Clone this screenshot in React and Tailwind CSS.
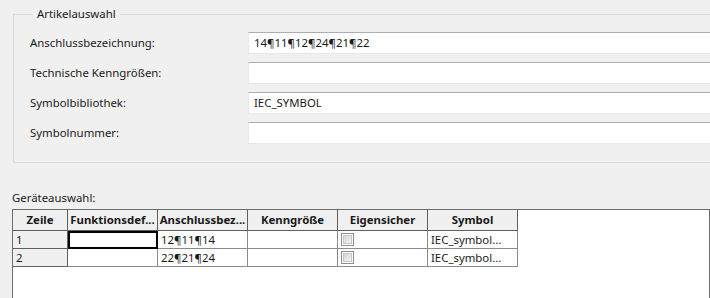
import React from 'react';

// Artikel- und Geräteauswahl (Windows forms style)
const fields = [
  { label: 'Anschlussbezeichnung:', value: '14¶11¶12¶24¶21¶22' },
  { label: 'Technische Kenngrößen:', value: '' },
  { label: 'Symbolbibliothek:', value: 'IEC_SYMBOL' },
  { label: 'Symbolnummer:', value: '' },
];

const columns = [
  { title: 'Zeile', width: 'w-[55px]' },
  { title: 'Funktionsdef...', width: 'w-[90px]' },
  { title: 'Anschlussbez...', width: 'w-[90px]' },
  { title: 'Kenngröße', width: 'w-[90px]' },
  { title: 'Eigensicher', width: 'w-[90px]' },
  { title: 'Symbol', width: 'w-[90px]' },
];

const rows = [
  { nr: '1', anschluss: '12¶11¶14', symbol: 'IEC_symbol...' },
  { nr: '2', anschluss: '22¶21¶24', symbol: 'IEC_symbol...' },
];

function Checkbox() {
  return (
    <span className="block w-[13px] h-[13px] border border-[#8f8f8f] bg-white p-[1px]">
      <span className="block w-full h-full bg-gradient-to-br from-[#d4d4d4] to-[#f4f4f4] border border-[#c8c8c8]" />
    </span>
  );
}

function App() {
  return (
    <div
      className="w-[710px] h-[298px] overflow-hidden bg-[#f0f0f0] text-[11.4px] text-[#1a1a1a]"
      style={{ fontFamily: '"Noto Sans", "Open Sans", sans-serif' }}
    >
      {/* Artikelauswahl group */}
      <fieldset className="ml-[13px] mt-[6px] w-[720px] border border-[#d9d9d9] pl-[16px] pb-[18px]">
        <legend className="ml-[3px] px-[4px] leading-[16px]">Artikelauswahl</legend>
        <div className="flex flex-col gap-[8px] pt-[10px]">
          {fields.map((f) => (
            <div key={f.label} className="flex items-center h-[22px]">
              <span className="w-[218px] shrink-0">{f.label}</span>
              <div className="flex items-center h-[22px] flex-1 bg-white border border-[#e3e9ef] border-t-[#abadb3] pl-[5px]">
                {f.value}
              </div>
            </div>
          ))}
        </div>
      </fieldset>

      {/* Geräteauswahl */}
      <div className="ml-[12px] mt-[27px] leading-[16px]">Geräteauswahl:</div>
      <div className="ml-[12px] mt-[3px] h-[120px] bg-white border border-[#6d6d6d]">
        <div className="flex">
          {columns.map((c) => (
            <div
              key={c.title}
              className={`${c.width} h-[21px] flex items-center justify-center bg-[#f0f0f0] border-r border-b border-[#5f5f5f] font-bold whitespace-nowrap overflow-hidden shrink-0`}
            >
              {c.title}
            </div>
          ))}
        </div>
        {rows.map((r, i) => (
          <div key={r.nr} className="flex">
            <div className="w-[55px] h-[18px] flex items-center pl-[3px] bg-[#f0f0f0] border-r border-b border-[#5f5f5f] shrink-0">
              {r.nr}
            </div>
            {i === 0 ? (
              <div className="w-[90px] h-[18px] border-2 border-black shrink-0" />
            ) : (
              <div className="w-[90px] h-[18px] border-r border-b border-[#8a8a8a] shrink-0" />
            )}
            <div className="w-[90px] h-[18px] flex items-center pl-[3px] border-r border-b border-[#8a8a8a] shrink-0">
              {r.anschluss}
            </div>
            <div className="w-[90px] h-[18px] border-r border-b border-[#8a8a8a] shrink-0" />
            <div className="w-[90px] h-[18px] flex items-center pl-[3px] border-r border-b border-[#8a8a8a] shrink-0">
              <Checkbox />
            </div>
            <div className="w-[90px] h-[18px] flex items-center pl-[3px] border-r border-b border-[#8a8a8a] whitespace-nowrap overflow-hidden shrink-0">
              {r.symbol}
            </div>
          </div>
        ))}
      </div>
    </div>
  );
}

export default App;
